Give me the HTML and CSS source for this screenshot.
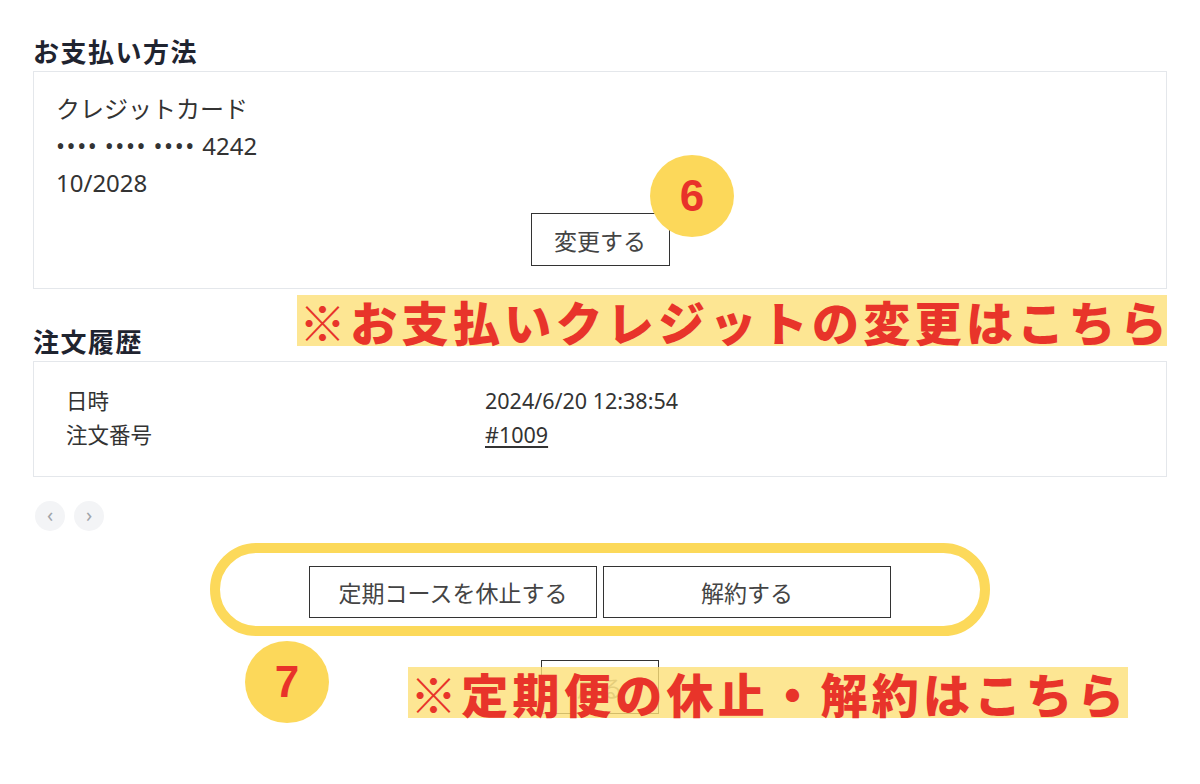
FILE: index.html
```html
<!DOCTYPE html>
<html lang="ja">
<head>
<meta charset="utf-8">
<link rel="stylesheet" href="styles.css">
</head>
<body>
<main class="page">
  <section class="section">
    <h2 class="section-title">お支払い方法</h2>
    <div class="card card-payment">
      <p class="pay-line">クレジットカード</p>
      <p class="pay-line"><span class="mask">••••</span> <span class="mask">••••</span> <span class="mask">••••</span> 4242</p>
      <p class="pay-line">10/2028</p>
      <div class="center-row">
        <button class="btn btn-change">変更する</button>
      </div>
    </div>
  </section>

  <section class="section section-orders">
    <h2 class="section-title">注文履歴</h2>
    <div class="card card-orders">
      <dl class="order-grid">
        <dt>日時</dt><dd>2024/6/20 12:38:54</dd>
        <dt>注文番号</dt><dd><a class="order-link" href="#">#1009</a></dd>
      </dl>
    </div>
    <div class="pager">
      <span class="pager-btn">&#8249;</span>
      <span class="pager-btn">&#8250;</span>
    </div>
  </section>

  <div class="actions">
    <button class="btn btn-action">定期コースを休止する</button>
    <button class="btn btn-action">解約する</button>
  </div>
  <div class="back-row">
    <button class="btn btn-back">戻る</button>
  </div>

  <div class="note-ring"></div>
  <div class="badge badge-6">6</div>
  <div class="badge badge-7">7</div>
  <div class="note note-1">※お支払いクレジットの変更はこちら</div>
  <div class="note note-2">※定期便の休止・解約はこちら</div>
</main>
</body>
</html>
```

FILE: styles.css
```css
* { box-sizing: border-box; }
html, body { margin: 0; padding: 0; background: #fff; }
body {
  font-family: "Noto Sans", "Noto Sans CJK JP", sans-serif;
  color: #333;
}
.page {
  position: relative;
  width: 1200px;
  height: 784px;
  padding: 33px 33px 0 33px;
  overflow: hidden;
}
.section-title {
  margin: 0;
  font-size: 26px;
  line-height: 38px;
  font-weight: 700;
  color: #1f2430;
  letter-spacing: 1.5px;
}
.card {
  border: 1px solid #e4e7eb;
  background: #fff;
}
.card-payment {
  padding: 18px 22px 22px;
}
.pay-line {
  margin: 0;
  font-size: 24px;
  line-height: 37px;
  color: #333;
}
.mask {
  letter-spacing: 1.6px;
}
.center-row {
  display: flex;
  justify-content: center;
  margin-top: 12px;
}
.btn {
  font-family: "Noto Sans", "Noto Sans CJK JP", sans-serif;
  background: #fff;
  border: 1px solid #333;
  color: #444;
  font-size: 23px;
  cursor: pointer;
  padding: 0;
}
.btn-change {
  width: 139px;
  height: 53px;
}
.section-orders {
  margin-top: 34px;
}
.card-orders {
  padding: 22px 32px 24px;
}
.order-grid {
  display: grid;
  grid-template-columns: 419px 1fr;
  margin: 0;
  font-size: 21.5px;
  line-height: 34px;
}
.order-grid dt, .order-grid dd { margin: 0; color: #333; }
.order-link { color: #333; text-decoration: underline; text-underline-offset: 3px; }
.pager {
  display: flex;
  gap: 9px;
  margin-top: 24px;
  padding-left: 2px;
}
.pager-btn {
  width: 30px;
  height: 30px;
  border-radius: 50%;
  background: #f3f4f6;
  color: #a0a4aa;
  font-size: 20px;
  line-height: 28px;
  text-align: center;
}
.actions {
  display: flex;
  justify-content: center;
  gap: 6px;
  margin-top: 35px;
}
.btn-action {
  width: 288px;
  height: 52px;
}
.back-row {
  display: flex;
  justify-content: center;
  margin-top: 42px;
}
.btn-back {
  width: 118px;
  height: 54px;
  color: #888;
}
.note-ring {
  position: absolute;
  left: 210px;
  top: 543px;
  width: 780px;
  height: 93px;
  border: 10px solid #fcd95a;
  border-radius: 47px;
}
.badge {
  position: absolute;
  width: 84px;
  height: 82px;
  border-radius: 50%;
  background: #fcd85a;
  color: #e8322a;
  font-family: "Liberation Sans", Arial, sans-serif;
  font-weight: 700;
  font-size: 44px;
  display: flex;
  align-items: center;
  justify-content: center;
}
.badge-6 { left: 650px; top: 155px; }
.badge-7 { left: 245px; top: 641px; }
.note {
  position: absolute;
  background: rgba(253, 224, 120, 0.8);
  color: #e8342a;
  font-family: "Noto Sans CJK JP", sans-serif;
  font-weight: 900;
  font-size: 47px;
  line-height: 51px;
  height: 51px;
  letter-spacing: 4.3px;
  white-space: nowrap;
}
.note-1 { left: 297px; top: 295px; width: 870px; padding-left: 2px; }
.note-2 { left: 408px; top: 667px; width: 720px; padding-left: 2px; }
```
